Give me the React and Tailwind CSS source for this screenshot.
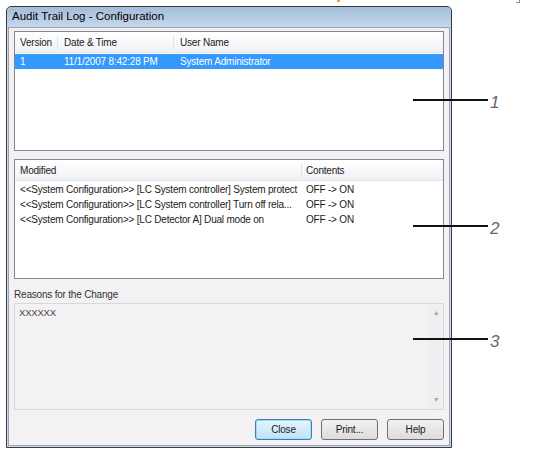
export default function App() {
  const changes = [
    ["<<System Configuration>> [LC System controller] System protect", "OFF -> ON"],
    ["<<System Configuration>> [LC System controller] Turn off rela...", "OFF -> ON"],
    ["<<System Configuration>> [LC Detector A] Dual mode on", "OFF -> ON"],
  ];

  return (
    <div className="relative w-[537px] h-[449px] bg-white overflow-hidden font-['Liberation_Sans',sans-serif] text-[10px] tracking-[-0.2px] text-[#1a1a1a]">
      <div className="absolute left-[337px] top-0 w-[3px] h-[2px] bg-[#e8a060]" />
      <div className="absolute left-[516px] top-0 w-[4px] h-[3px] border-b border-r border-[#6b8fc9]" />

      <div className="ml-[6px] pt-[6px] w-[446px]">
        <div className="h-[442px] flex flex-col border border-[#3a3a3a] rounded-t-[5px] bg-[#c9dbee]">
          <div className="h-[20px] flex items-center px-[5px] bg-gradient-to-b from-[#a2bcd9] to-[#c6d8ec] text-[11.5px] tracking-normal text-black rounded-t-[5px]">
            Audit Trail Log - Configuration
          </div>
          <div className="flex-1 mx-[1px] mb-[1px] border border-[#9aa3ad] bg-[#f4f1f4] flex flex-col px-[5px] pt-[3px]">
            <div className="h-[120px] border border-[#828790] bg-white flex flex-col">
              <div className="h-[21px] flex items-center bg-gradient-to-b from-[#ffffff] to-[#f1f2f7] border-b border-[#e3e4e8]">
                <div className="w-[43px] pl-[5px] border-r border-[#e3e4e8]">Version</div>
                <div className="w-[116px] pl-[6px] border-r border-[#e3e4e8]">Date &amp; Time</div>
                <div className="pl-[6px]">User Name</div>
              </div>
              <div className="mt-[1px] h-[15px] flex items-center bg-[#3399ff] text-white">
                <div className="w-[43px] pl-[5px]">1</div>
                <div className="w-[116px] pl-[6px]">11/1/2007 8:42:28 PM</div>
                <div className="pl-[6px]">System Administrator</div>
              </div>
            </div>

            <div className="mt-[8px] h-[120px] border border-[#828790] bg-white flex flex-col">
              <div className="h-[21px] flex items-center bg-gradient-to-b from-[#ffffff] to-[#f1f2f7] border-b border-[#e3e4e8]">
                <div className="w-[287px] pl-[5px] border-r border-[#e3e4e8]">Modified</div>
                <div className="pl-[4px]">Contents</div>
              </div>
              <div className="pt-[1px]">
                {changes.map(([m, c]) => (
                  <div key={m} className="h-[15px] flex items-center">
                    <div className="w-[287px] pl-[5px] whitespace-nowrap overflow-hidden">{m}</div>
                    <div className="pl-[4px] whitespace-nowrap">{c}</div>
                  </div>
                ))}
              </div>
            </div>

            <div className="mt-[9px] h-[13px] leading-[13px] text-[#333]">Reasons for the Change</div>
            <div className="mt-[2px] h-[107px] border border-[#d7d7dc] bg-[#f4f1f4] flex">
              <div className="flex-1 pl-[4px] pt-[2px] text-[9.5px] text-[#444]">XXXXXX</div>
              <div className="w-[14px] flex flex-col items-center justify-between py-[4px] bg-[#f0eef0] text-[7px] text-[#a8a8a8]">
                <span>▲</span>
                <span>▼</span>
              </div>
            </div>

            <div className="mt-[9px] flex justify-end gap-[9px]">
              <button className="w-[57px] h-[21px] rounded-[3px] border border-[#3c7fb1] bg-gradient-to-b from-[#e6f5fd] to-[#bfe3f8] shadow-[inset_0_0_0_1px_#9fdaf7] text-[10px]">
                Close
              </button>
              <button className="w-[57px] h-[21px] rounded-[3px] border border-[#707070] bg-gradient-to-b from-[#f2f2f2] to-[#dcdcdc] text-[10px]">
                Print...
              </button>
              <button className="w-[57px] h-[21px] rounded-[3px] border border-[#707070] bg-gradient-to-b from-[#f2f2f2] to-[#dcdcdc] text-[10px]">
                Help
              </button>
            </div>
          </div>
        </div>
      </div>

      <div className="absolute left-[413px] top-[99px] w-[75px] h-[2px] bg-[#111]" />
      <div className="absolute left-[490px] top-[90px] text-[17px] italic text-[#666] font-['Liberation_Sans',sans-serif]">1</div>
      <div className="absolute left-[413px] top-[225px] w-[75px] h-[2px] bg-[#111]" />
      <div className="absolute left-[490px] top-[216px] text-[17px] italic text-[#666] font-['Liberation_Sans',sans-serif]">2</div>
      <div className="absolute left-[413px] top-[338px] w-[75px] h-[2px] bg-[#111]" />
      <div className="absolute left-[490px] top-[329px] text-[17px] italic text-[#666] font-['Liberation_Sans',sans-serif]">3</div>
    </div>
  );
}
